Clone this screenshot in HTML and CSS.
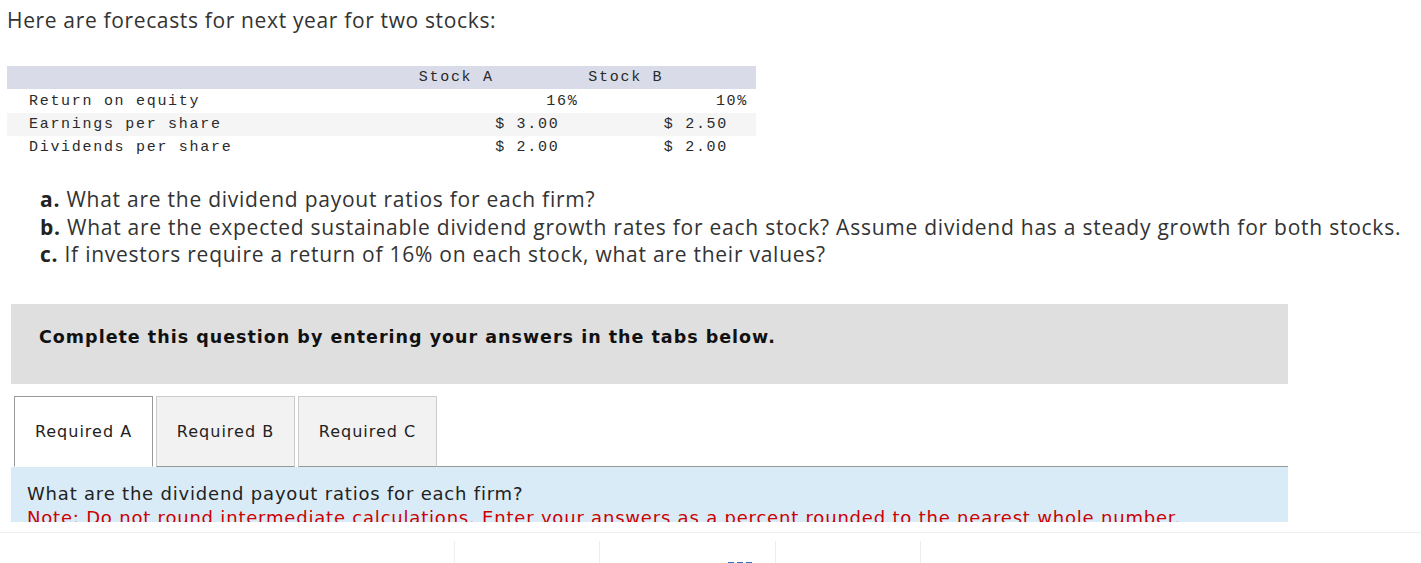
FILE: index.html
```html
<!DOCTYPE html>
<html>
<head>
<meta charset="utf-8">
<link rel="stylesheet" href="styles.css">
</head>
<body>
<div class="page">
  <p class="intro">Here are forecasts for next year for two stocks:</p>

  <table class="forecast">
    <thead>
      <tr>
        <th class="label"></th>
        <th class="col-a">Stock A</th>
        <th class="col-b">Stock B</th>
      </tr>
    </thead>
    <tbody>
      <tr>
        <td class="label">Return on equity</td>
        <td class="num pct-a">16%</td>
        <td class="num pct-b">10%</td>
      </tr>
      <tr class="shade">
        <td class="label">Earnings per share</td>
        <td class="num usd-a">$ 3.00</td>
        <td class="num usd-b">$ 2.50</td>
      </tr>
      <tr>
        <td class="label">Dividends per share</td>
        <td class="num usd-a">$ 2.00</td>
        <td class="num usd-b">$ 2.00</td>
      </tr>
    </tbody>
  </table>

  <ol class="questions">
    <li><b>a.</b> What are the dividend payout ratios for each firm?</li>
    <li><b>b.</b> What are the expected sustainable dividend growth rates for each stock? Assume dividend has a steady growth for both stocks.</li>
    <li><b>c.</b> If investors require a return of 16% on each stock, what are their values?</li>
  </ol>

  <div class="instruction">Complete this question by entering your answers in the tabs below.</div>

  <div class="tabs">
    <div class="tab active">Required A</div>
    <div class="tab">Required B</div>
    <div class="tab">Required C</div>
    <div class="tab-fill"></div>
  </div>
  <div class="panel">
    <p class="panel-q">What are the dividend payout ratios for each firm?</p>
    <p class="panel-note">Note: Do not round intermediate calculations. Enter your answers as a percent rounded to the nearest whole number.</p>
  </div>

  <div class="answer-grid">
    <div class="cell c1"></div>
    <div class="cell c2"></div>
    <div class="cell c3"><span class="dash"></span></div>
    <div class="cell c4"></div>
    <div class="cell c5"></div>
  </div>
</div>
</body>
</html>
```

FILE: styles.css
```css
html, body {
  margin: 0;
  padding: 0;
  background: #fff;
}
body {
  font-family: "Open Sans", Lato, sans-serif;
  color: #222;
  overflow: hidden;
}
.page {
  width: 1421px;
  height: 563px;
  overflow: hidden;
}
.intro {
  margin: 0;
  padding: 7px 0 0 7px;
  font-size: 21px;
  letter-spacing: 0.65px;
  line-height: 26px;
  color: #333;
}
.forecast {
  margin: 33px 0 0 7px;
  border-collapse: collapse;
  font-family: "Liberation Mono", "DejaVu Sans Mono", monospace;
  font-size: 15px;
  letter-spacing: 1.7px;
  color: #2a2a2a;
  width: 749px;
}
.forecast th, .forecast td {
  padding: 0;
  height: 23px;
  line-height: 23px;
  font-weight: normal;
  white-space: nowrap;
}
.forecast thead tr {
  background: #d9dce8;
}
.forecast th {
  height: 22px;
  text-align: left;
  padding-left: 7px;
}
.forecast th.label { width: 401px; padding-left: 0; }
.forecast th.col-a { width: 161px; }
.forecast th.col-b { width: 166px; }
.forecast td { position: relative; top: 1px; }
.forecast td.label { padding-left: 22px; }
.forecast td.num { text-align: right; }
.forecast td.pct-a { padding-right: 3px; }
.forecast td.usd-a { padding-right: 22px; }
.forecast td.pct-b { padding-right: 8px; }
.forecast td.usd-b { padding-right: 28px; }
.forecast tr.shade { background: #f5f5f5; }

.questions {
  list-style: none;
  margin: 28px 0 0 0;
  padding: 0 0 0 40px;
  font-size: 21px;
  letter-spacing: 0.75px;
  line-height: 27.5px;
  color: #333;
}
.questions b { color: #222; font-weight: 700; }

.instruction {
  box-sizing: border-box;
  margin: 35px 0 0 11px;
  width: 1277px;
  height: 80px;
  padding: 22px 0 0 28px;
  background: #dfdfdf;
  font-family: "DejaVu Sans", Verdana, sans-serif;
  font-weight: bold;
  font-size: 17.5px;
  line-height: 22px;
  letter-spacing: 1px;
  color: #111;
}

.tabs {
  margin: 12px 0 0 11px;
  width: 1277px;
  height: 71px;
  display: flex;
  align-items: stretch;
  font-family: "DejaVu Sans", Verdana, sans-serif;
  font-size: 16px;
  letter-spacing: 1px;
  color: #222;
}
.tab {
  box-sizing: border-box;
  width: 139px;
  margin-left: 3px;
  border: 1px solid #ccc;
  border-bottom: 1px solid #999;
  background: #f2f2f2;
  display: flex;
  align-items: center;
  justify-content: center;
}
.tab.active {
  background: #fff;
  border-color: #999;
  border-bottom-color: #fff;
}
.tab-fill {
  flex: 1;
  border-bottom: 1px solid #999;
}
.panel {
  margin-left: 11px;
  width: 1277px;
  height: 55px;
  background: #daebf8;
  box-sizing: border-box;
  padding: 15px 0 0 16px;
  overflow: hidden;
  font-family: "DejaVu Sans", Verdana, sans-serif;
  font-size: 18px;
  letter-spacing: 0.8px;
  line-height: 24px;
}
.panel p { margin: 0; white-space: nowrap; }
.panel-q { color: #222; }
.panel-note { color: #c00; }

.answer-grid {
  margin-top: 10px;
  border-top: 1px solid #eee;
  display: flex;
  padding-top: 8px;
  height: 30px;
}
.cell {
  box-sizing: border-box;
  height: 30px;
  position: relative;
}
.c1 { width: 455px; border-right: 1px solid #eee; }
.c2 { width: 145px; border-right: 1px solid #eee; }
.c3 { width: 176px; border-right: 1px solid #eee; }
.c4 { width: 145px; border-right: 1px solid #eee; }
.c5 { flex: 1; }
.dash {
  display: block;
  margin: 21px 0 0 128px;
  width: 24px;
  border-top: 3px dashed #2b6fc4;
}
```
